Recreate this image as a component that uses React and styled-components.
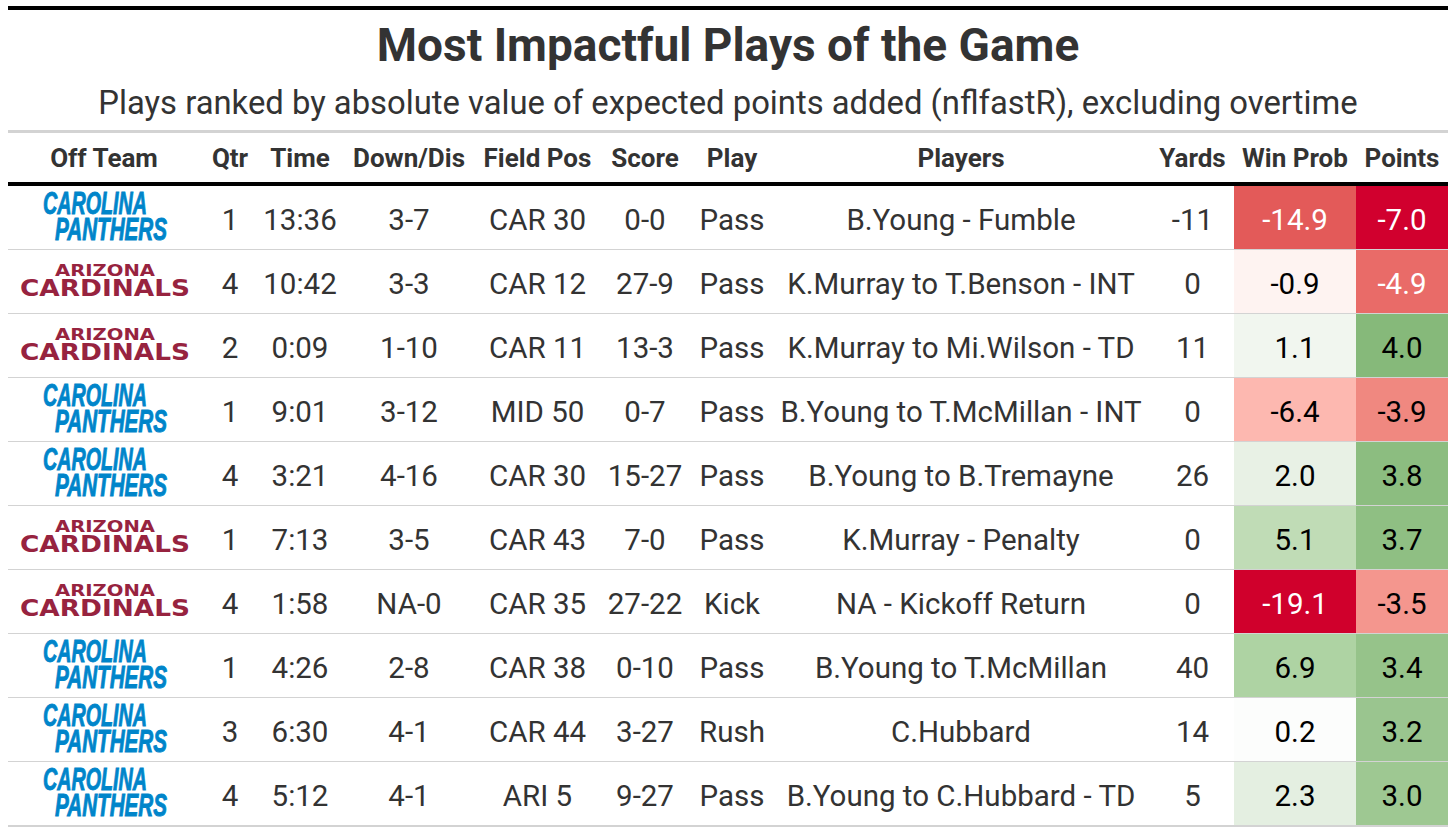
import React from 'react';
import styled, { createGlobalStyle } from 'styled-components';

const GlobalStyle = createGlobalStyle`
  html, body {
    margin: 0;
    padding: 0;
    background: #ffffff;
  }
  body {
    font-family: Roboto, "Noto Sans", sans-serif;
    color: #333333;
  }
`;

const COLUMNS = [
  { key: 'team', label: 'Off Team', width: 192 },
  { key: 'qtr', label: 'Qtr', width: 60 },
  { key: 'time', label: 'Time', width: 80 },
  { key: 'down', label: 'Down/Dis', width: 138 },
  { key: 'pos', label: 'Field Pos', width: 119 },
  { key: 'score', label: 'Score', width: 96 },
  { key: 'play', label: 'Play', width: 78 },
  { key: 'players', label: 'Players', width: 380 },
  { key: 'yards', label: 'Yards', width: 83 },
  { key: 'wp', label: 'Win Prob', width: 122 },
  { key: 'pts', label: 'Points', width: 92 },
];

const PLAYS = [
  { team: 'CAR', qtr: 1, time: '13:36', down: '3-7', pos: 'CAR 30', score: '0-0', play: 'Pass', players: 'B.Young - Fumble', yards: -11, wp: { v: '-14.9', bg: '#e35a59', light: true }, pts: { v: '-7.0', bg: '#d1002e', light: true } },
  { team: 'ARI', qtr: 4, time: '10:42', down: '3-3', pos: 'CAR 12', score: '27-9', play: 'Pass', players: 'K.Murray to T.Benson - INT', yards: 0, wp: { v: '-0.9', bg: '#fef3f1' }, pts: { v: '-4.9', bg: '#e96b68', light: true } },
  { team: 'ARI', qtr: 2, time: '0:09', down: '1-10', pos: 'CAR 11', score: '13-3', play: 'Pass', players: 'K.Murray to Mi.Wilson - TD', yards: 11, wp: { v: '1.1', bg: '#f1f6ef' }, pts: { v: '4.0', bg: '#86b97a' } },
  { team: 'CAR', qtr: 1, time: '9:01', down: '3-12', pos: 'MID 50', score: '0-7', play: 'Pass', players: 'B.Young to T.McMillan - INT', yards: 0, wp: { v: '-6.4', bg: '#fdb8b0' }, pts: { v: '-3.9', bg: '#f08880' } },
  { team: 'CAR', qtr: 4, time: '3:21', down: '4-16', pos: 'CAR 30', score: '15-27', play: 'Pass', players: 'B.Young to B.Tremayne', yards: 26, wp: { v: '2.0', bg: '#e8f1e5' }, pts: { v: '3.8', bg: '#8cbd80' } },
  { team: 'ARI', qtr: 1, time: '7:13', down: '3-5', pos: 'CAR 43', score: '7-0', play: 'Pass', players: 'K.Murray - Penalty', yards: 0, wp: { v: '5.1', bg: '#c0dcb6' }, pts: { v: '3.7', bg: '#8fbf83' } },
  { team: 'ARI', qtr: 4, time: '1:58', down: 'NA-0', pos: 'CAR 35', score: '27-22', play: 'Kick', players: 'NA - Kickoff Return', yards: 0, wp: { v: '-19.1', bg: '#d0002c', light: true }, pts: { v: '-3.5', bg: '#f4968e' } },
  { team: 'CAR', qtr: 1, time: '4:26', down: '2-8', pos: 'CAR 38', score: '0-10', play: 'Pass', players: 'B.Young to T.McMillan', yards: 40, wp: { v: '6.9', bg: '#aed3a3' }, pts: { v: '3.4', bg: '#96c38a' } },
  { team: 'CAR', qtr: 3, time: '6:30', down: '4-1', pos: 'CAR 44', score: '3-27', play: 'Rush', players: 'C.Hubbard', yards: 14, wp: { v: '0.2', bg: '#fcfdfc' }, pts: { v: '3.2', bg: '#9ac58f' } },
  { team: 'CAR', qtr: 4, time: '5:12', down: '4-1', pos: 'ARI 5', score: '9-27', play: 'Pass', players: 'B.Young to C.Hubbard - TD', yards: 5, wp: { v: '2.3', bg: '#e4efe1' }, pts: { v: '3.0', bg: '#9ec892' } },
];

const Page = styled.div`
  padding: 6px 8px 0;
`;

const Heading = styled.div`
  border-top: 4px solid #000000;
  padding: 8px 0 7px;
  text-align: center;
  border-bottom: 3px solid #d3d3d3;
`;

const Title = styled.h1`
  margin: 0;
  font-family: Roboto, sans-serif;
  font-weight: 700;
  font-size: 46px;
  line-height: 54px;
  color: #333333;
`;

const Subtitle = styled.div`
  margin-top: 11px;
  font-family: Roboto, sans-serif;
  font-weight: 400;
  font-size: 32.8px;
  line-height: 40px;
  color: #333333;
`;

const Table = styled.table`
  width: 1440px;
  border-collapse: collapse;
  table-layout: fixed;
  font-family: Roboto, sans-serif;
`;

const HeadCell = styled.th`
  height: 47px;
  padding: 1px 0 1px;
  font-weight: 700;
  font-size: 26px;
  color: #333333;
  text-align: center;
  vertical-align: middle;
  white-space: nowrap;
  border-bottom: 4px solid #000000;
`;

const Row = styled.tr`
  border-bottom: ${(props) => (props.last ? '2px' : '1px')} solid #d3d3d3;
`;

const Cell = styled.td`
  height: 63px;
  padding: 4px 0 0;
  box-sizing: border-box;
  font-size: 29.5px;
  font-weight: 400;
  color: #333333;
  text-align: center;
  vertical-align: middle;
  white-space: nowrap;
`;

const ShadedCell = styled(Cell)`
  background: ${(props) => props.bg};
  color: ${(props) => (props.light ? '#ffffff' : '#000000')};
`;

const LogoCell = styled.td`
  height: 63px;
  padding: 0;
  vertical-align: middle;
`;

const Logo = styled.svg`
  display: block;
  overflow: visible;
  margin-left: ${(props) => props.offset}px;
`;

const PanthersLogo = () => (
  <Logo width="128" height="50" viewBox="0 0 128 50" offset={34}>
    <g
      fill="#0085ca"
      stroke="#0085ca"
      strokeWidth="0.9"
      fontFamily="'Liberation Sans', Arial, sans-serif"
      fontWeight="700"
      fontStyle="italic"
      fontSize="31"
    >
      <text x="1" y="21" textLength="104" lengthAdjust="spacingAndGlyphs">CAROLINA</text>
      <text x="13" y="47" textLength="112" lengthAdjust="spacingAndGlyphs">PANTHERS</text>
    </g>
  </Logo>
);

const CardinalsLogo = () => (
  <Logo width="170" height="38" viewBox="0 0 170 38" offset={12}>
    <g fill="#97233f" fontFamily="'DejaVu Sans', sans-serif" fontWeight="700">
      <text x="35" y="12.5" fontSize="15" textLength="100" lengthAdjust="spacingAndGlyphs">ARIZONA</text>
      <text x="0" y="33" fontSize="23.5" textLength="170" lengthAdjust="spacingAndGlyphs">CARDINALS</text>
    </g>
  </Logo>
);

const App = () => (
  <Page>
    <GlobalStyle />
    <Heading>
      <Title>Most Impactful Plays of the Game</Title>
      <Subtitle>Plays ranked by absolute value of expected points added (nflfastR), excluding overtime</Subtitle>
    </Heading>
    <Table>
      <colgroup>
        {COLUMNS.map((col) => (
          <col key={col.key} style={{ width: col.width }} />
        ))}
      </colgroup>
      <thead>
        <tr>
          {COLUMNS.map((col) => (
            <HeadCell key={col.key}>{col.label}</HeadCell>
          ))}
        </tr>
      </thead>
      <tbody>
        {PLAYS.map((p, i) => (
          <Row key={i} last={i === PLAYS.length - 1}>
            <LogoCell>{p.team === 'CAR' ? <PanthersLogo /> : <CardinalsLogo />}</LogoCell>
            <Cell>{p.qtr}</Cell>
            <Cell>{p.time}</Cell>
            <Cell>{p.down}</Cell>
            <Cell>{p.pos}</Cell>
            <Cell>{p.score}</Cell>
            <Cell>{p.play}</Cell>
            <Cell>{p.players}</Cell>
            <Cell>{p.yards}</Cell>
            <ShadedCell bg={p.wp.bg} light={p.wp.light}>{p.wp.v}</ShadedCell>
            <ShadedCell bg={p.pts.bg} light={p.pts.light}>{p.pts.v}</ShadedCell>
          </Row>
        ))}
      </tbody>
    </Table>
  </Page>
);

export default App;
